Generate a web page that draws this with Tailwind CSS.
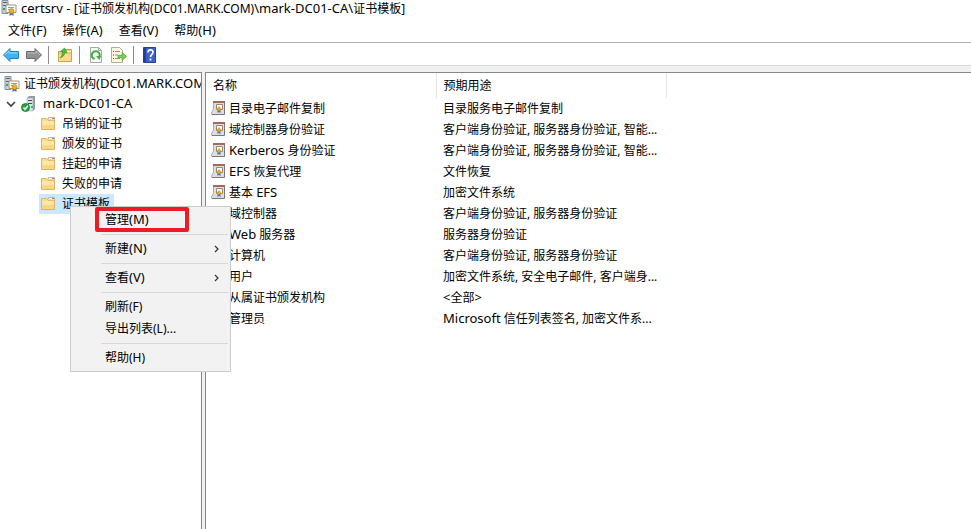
<!DOCTYPE html>
<html lang="zh-CN">

<head>
  <meta charset="UTF-8" />
  <meta name="viewport" content="width=device-width, initial-scale=1.0" />
  <title>certsrv</title>
  <script src="https://cdn.jsdelivr.net/npm/@tailwindcss/browser@4"></script>
</head>

<body class="min-h-screen flex flex-col bg-[#f0f0f0] font-['Noto_Sans','Noto_Sans_CJK_SC',sans-serif] text-xs text-black cursor-default">

  <!-- Shared icons -->
  <svg class="hidden">
    <symbol id="icon-ca" viewBox="0 0 16 16">
      <path d="M1 .5h6v13H1z" fill="#c9d0d5" stroke="#87929a" />
      <path d="M2 2.500h4M2 5.500h3" stroke="#536371" />
      <path d="M2 9h2" stroke="#39a94a" stroke-width="2" />
      <path d="M5 5h10v7.500H5z" fill="#fff" stroke="#a3937c" />
      <path d="M7 7.500h6M7 9.500h2" stroke="#7f9fc9" />
      <path d="M8.500 12v4l2-1.300 2 1.300v-4z" fill="#416fc2" />
      <circle cx="10.500" cy="11" r="2.500" fill="#f3ae18" stroke="#c37e0b" stroke-width=".6" />
    </symbol>
    <symbol id="icon-server" viewBox="0 0 16 16">
      <path d="M6 2l2-2h6v13l-2 2H6z" fill="#8f9aa3" />
      <path d="M6 2h6v13H6z" fill="#dce2e6" stroke="#a3adb4" stroke-width=".6" />
      <path d="M7 4.500h4M7 7.500h4" stroke="#43505a" stroke-width="1.200" />
      <path d="M10 11h2" stroke="#39bd56" stroke-width="2" />
      <circle cx="4.500" cy="11.500" r="4" fill="#27a043" stroke="#147b2c" stroke-width=".8" />
      <path d="M2.500 11.500l1.500 1.800 3-3.500" fill="none" stroke="#fff" stroke-width="1.400" />
    </symbol>
    <symbol id="icon-folder" viewBox="0 0 16 16">
      <path d="M1.500 2.500h5l1 1H8l.5-2h6v12h-13z" fill="#fbdc8f" stroke="#dbb565" />
      <path d="M2 5h12v4H2z" fill="#ffe6a8" />
      <path d="M2 9h12v4H2z" fill="#f9d681" />
      <path d="M9 2.500h3" stroke="#fff" />
      <path d="M12 2.500h2" stroke="#4b9bd8" />
      <path d="M8 4.500h6" stroke="#e3bd6c" />
    </symbol>
    <symbol id="icon-template" viewBox="0 0 14 14">
      <path d="M3 1h10v12H1v-2l2-3z" fill="#dedede" />
      <path d="M1 13.500h12.500V1" fill="none" stroke="#77787b" />
      <path d="M2.500 2v6L.5 12v1.500" fill="none" stroke="#a9aaac" />
      <path d="M2 0h12v2H2z" fill="#a5685a" />
      <path d="M5.500 3.500h6v5h-6z" fill="#fff" stroke="#9b8572" />
      <path d="M6.500 8.500V12l1.500-1 1.500 1V8.500z" fill="#4a6fb5" />
      <path d="M8 5.500l2 2.500-2 2-2-2z" fill="#eaa719" stroke="#c58a18" stroke-width=".5" />
    </symbol>
  </svg>

  <!-- Title bar -->
  <header class="bg-white border-b border-[#b0b0b0]">
    <div class="flex items-center h-4 px-px gap-1">
      <svg class="size-4"><use href="#icon-ca" /></svg>
      <h1 class="whitespace-nowrap leading-4"><span class="text-[13px]">certsrv - [</span>证书颁发机构(DC01.MARK.COM)<span class="text-[13px]">\mark-DC01-CA\</span>证书模板]</h1>
    </div>
    <nav class="flex items-center h-[26px] px-2 pt-1 gap-4">
      <button>文件<span class="text-[13px]">(F)</span></button>
      <button>操作<span class="text-[13px]">(A)</span></button>
      <button>查看<span class="text-[13px]">(V)</span></button>
      <button>帮助<span class="text-[13px]">(H)</span></button>
    </nav>
  </header>

  <!-- Toolbar -->
  <div class="flex items-center h-[23px] bg-white border-b border-[#d9d9d9] px-[3px] pt-[2px]">
    <button aria-label="后退">
      <svg class="w-4 h-4" viewBox="0 0 16 16">
        <path d="M.5 8L7 1.500v3h8.500v7H7v3z" fill="#42b4ed" stroke="#2484c3" />
        <path d="M2 8l4-4v2h8.500" fill="none" stroke="#93dcfb" />
      </svg>
    </button>
    <button aria-label="前进" class="ml-[7px]">
      <svg class="w-4 h-4" viewBox="0 0 16 16">
        <path d="M15.500 8L9 1.500v3H.5v7H9v3z" fill="#929292" stroke="#6c6c6c" />
        <path d="M1.500 6H10V4l4 4" fill="none" stroke="#bcbcbc" />
      </svg>
    </button>
    <div class="w-px h-[18px] bg-[#8c8c8c] mx-[6px]"></div>
    <button aria-label="上一级" class="ml-[2px]">
      <svg class="w-4 h-4" viewBox="0 0 16 16">
        <path d="M1.500 4.500h6l1-2h6v12h-13z" fill="#edc870" stroke="#c9a250" />
        <path d="M2 7h12v7H2z" fill="#fbdc8c" />
        <path d="M10 4.500h4" stroke="#fff" />
        <path d="M3 11C6 10 7.500 8 8 5.500h2L7.500 1 3.500 4.500h2C5.500 7 5 9 3 11z" fill="#48bd38" stroke="#278e20" stroke-width=".6" />
      </svg>
    </button>
    <div class="w-px h-[18px] bg-[#8c8c8c] mx-[6px]"></div>
    <button aria-label="刷新" class="ml-[2px]">
      <svg class="w-4 h-4" viewBox="0 0 16 16">
        <path d="M2.500.5h8l3 3v12h-11z" fill="#f8f9f6" stroke="#a5a8a5" />
        <path d="M10.500.5v3h3" fill="none" stroke="#a5a8a5" />
        <path d="M6.500 12A4 4 0 1 1 11.500 9.500" fill="none" stroke="#3cac3d" stroke-width="2" />
        <path d="M8 9h5l-1.500 4z" fill="#3cac3d" />
      </svg>
    </button>
    <button aria-label="导出列表" class="ml-[7px]">
      <svg class="w-4 h-4" viewBox="0 0 16 16">
        <path d="M.5.5h8l3 3v12H.5z" fill="#fdf8de" stroke="#b1ad98" />
        <path d="M2 4.500h1M2 8h1M2 11.500h1" stroke="#555" />
        <path d="M4 4.500h5M4 8h3M4 11.500h5" stroke="#8d8aa3" />
        <path d="M7 8.500h4V5.500l4.500 4-4.500 4v-3H7z" fill="#79cf52" stroke="#4ba52e" stroke-width=".7" />
      </svg>
    </button>
    <div class="w-px h-[18px] bg-[#8c8c8c] mx-[6px]"></div>
    <button aria-label="帮助" class="ml-[2px]">
      <svg class="w-4 h-4" viewBox="0 0 16 16">
        <path d="M1.500.5h12v15h-12z" fill="#3c62cc" stroke="#26418e" />
        <path d="M2 1h2v14H2z" fill="#263f9c" />
        <path d="M6 5.500C6 2 11 2 11 5.200c0 2-2.500 2.300-2.500 4.800M8.500 11.500v2" fill="none" stroke="#fff" stroke-width="1.700" />
      </svg>
    </button>
  </div>

  <div class="flex flex-1 gap-[3px] pt-[6px]">

    <!-- Tree -->
    <aside class="w-[202px] shrink-0 overflow-hidden bg-white border-t border-r border-[#828790] pt-px whitespace-nowrap">
      <div class="flex items-center h-5 pl-1 gap-1">
        <svg class="size-4 shrink-0"><use href="#icon-ca" /></svg>
        <span>证书颁发机构<span class="text-[13px]">(DC01.MARK.COM)</span></span>
      </div>
      <div class="flex items-center h-5 pl-[6px]">
        <svg class="w-[10px] h-[10px]" viewBox="0 0 10 10"><path d="M1 3l4 4 4-4" fill="none" stroke="#404040" stroke-width="1.600" /></svg>
        <svg class="size-4 ml-[5px] mr-[6px]"><use href="#icon-server" /></svg>
        <span class="text-[13px]">mark-DC01-CA</span>
      </div>
      <ul id="tree" class="pl-[39px]"></ul>
    </aside>

    <!-- Template list -->
    <main class="flex-1 min-w-0 overflow-hidden bg-white border-t border-l border-[#828790]">
      <table class="table-fixed w-[460px] text-left whitespace-nowrap">
        <thead>
          <tr class="h-[25px]">
            <th class="w-[230px] p-0 pl-[7px] font-normal border-r border-[#e5e5e5]">名称</th>
            <th class="w-[230px] p-0 pl-[7px] font-normal border-r border-[#e5e5e5]">预期用途</th>
          </tr>
        </thead>
        <tbody id="templates"></tbody>
      </table>
    </main>
  </div>

  <!-- Context menu -->
  <div class="absolute left-[70px] top-[206px] w-[161px] bg-[#f2f2f2] border border-[#ccc] py-[2px]">
    <div class="flex flex-col">
      <button class="h-[22px] pl-[34px] text-left">管理<span class="text-[13px]">(M)</span></button>
      <hr class="my-[3px] ml-[30px] mr-[2px] border-[#d7d7d7]" />
      <button class="h-[22px] pl-[34px] pr-[9px] flex items-center justify-between"><span>新建<span class="text-[13px]">(N)</span></span>
        <svg class="w-2 h-2" viewBox="0 0 8 8"><path d="M2 1l3 3-3 3" fill="none" stroke="#333" stroke-width="1.200" /></svg>
      </button>
      <hr class="my-[3px] ml-[30px] mr-[2px] border-[#d7d7d7]" />
      <button class="h-[22px] pl-[34px] pr-[9px] flex items-center justify-between"><span>查看<span class="text-[13px]">(V)</span></span>
        <svg class="w-2 h-2" viewBox="0 0 8 8"><path d="M2 1l3 3-3 3" fill="none" stroke="#333" stroke-width="1.200" /></svg>
      </button>
      <hr class="my-[3px] ml-[30px] mr-[2px] border-[#d7d7d7]" />
      <button class="h-[22px] pl-[34px] text-left">刷新(F)</button>
      <button class="h-[22px] pl-[34px] text-left">导出列表(L)...</button>
      <hr class="my-[3px] ml-[30px] mr-[2px] border-[#d7d7d7]" />
      <button class="h-[22px] pl-[34px] text-left">帮助(H)</button>
    </div>
    <!-- Highlight box -->
    <div class="absolute left-6 top-0 w-[94px] h-[25px] border-4 border-[#ed1c24] rounded-xs pointer-events-none"></div>
  </div>

  <script>
    const folders = ["吊销的证书", "颁发的证书", "挂起的申请", "失败的申请", "证书模板"];
    const templates = [
      ["目录电子邮件复制", "目录服务电子邮件复制"],
      ["域控制器身份验证", "客户端身份验证, 服务器身份验证, 智能..."],
      ["Kerberos 身份验证", "客户端身份验证, 服务器身份验证, 智能..."],
      ["EFS 恢复代理", "文件恢复"],
      ["基本 EFS", "加密文件系统"],
      ["域控制器", "客户端身份验证, 服务器身份验证"],
      ["Web 服务器", "服务器身份验证"],
      ["计算机", "客户端身份验证, 服务器身份验证"],
      ["用户", "加密文件系统, 安全电子邮件, 客户端身..."],
      ["从属证书颁发机构", "<全部>"],
      ["管理员", "Microsoft 信任列表签名, 加密文件系..."],
    ];

    // Latin words are set one size larger than the Chinese text
    function label(text) {
      return text.replace(/[A-Za-z]+|[<>]/g, (word) => {
        const safe = word.replace("<", "&lt;").replace(">", "&gt;");
        return `<span class="text-[13px]">${safe}</span>`;
      });
    }

    document.getElementById("tree").innerHTML = folders.map((name, i) => `
      <li class="flex">
        <span class="flex items-center h-5 pl-px pr-1 gap-[6px] ${i === 4 ? "bg-[#cce8ff]" : ""}">
          <svg class="size-4"><use href="#icon-folder" /></svg>${name}
        </span>
      </li>`).join("");

    document.getElementById("templates").innerHTML = templates.map(([name, usage]) => `
      <tr class="h-[21px]">
        <td class="p-0 pl-[5px]">
          <div class="flex items-center gap-1 h-5">
            <svg class="w-[14px] h-[14px] mb-[2px]"><use href="#icon-template" /></svg>
            <span>${label(name)}</span>
          </div>
        </td>
        <td class="p-0 pl-[7px]">${label(usage)}</td>
      </tr>`).join("");
  </script>
</body>

</html>
